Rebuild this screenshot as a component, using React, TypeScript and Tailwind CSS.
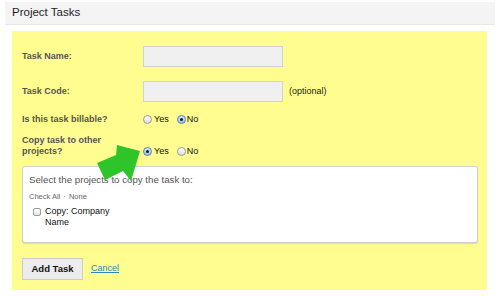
import React from "react";

const font = { fontFamily: '"Liberation Sans", Arial, sans-serif' };

const Radio = ({ checked }: { checked?: boolean }) =>
  checked ? (
    <span className="flex shrink-0 items-center justify-center w-[9px] h-[9px] rounded-full border border-[#4f7fbf] bg-gradient-to-b from-[#d9e8fa] to-[#9cc3ee]">
      <span className="block w-[3px] h-[3px] rounded-full bg-[#1a1a1a]" />
    </span>
  ) : (
    <span className="block shrink-0 w-[9px] h-[9px] rounded-full border border-[#9a9a9a] bg-gradient-to-b from-white to-[#dcdcdc]" />
  );

const YesNo = ({ yes }: { yes: boolean }) => (
  <div className="flex items-center text-[9px] text-[#111] leading-[11px]">
    <Radio checked={yes} />
    <span className="ml-[2px]">Yes</span>
    <span className="ml-[8px] block">
      <Radio checked={!yes} />
    </span>
    <span className="ml-[1px]">No</span>
  </div>
);

const Label = ({ children }: { children: React.ReactNode }) => (
  <div className="w-[121px] shrink-0 pr-[20px] text-[9px] font-bold leading-[11px] text-[#555]">
    {children}
  </div>
);

export default function App() {
  return (
    <div className="relative w-[500px] h-[297px] bg-white overflow-hidden" style={font}>
      <div className="mt-[2px] mx-[5px] h-[23px] bg-[#f5f4f5] border-b border-[#e9e8e9] flex items-center pl-[7px]">
        <span className="text-[11.5px] text-[#1e1e1e]">Project Tasks</span>
      </div>

      <div className="mt-[6px] ml-[12px] w-[475px] h-[259px] bg-[#fffd8f] pt-[15px] pl-[10px] pr-[9px]">
        <div className="flex items-center h-[21px]">
          <Label>Task Name:</Label>
          <div className="w-[140px] h-[21px] bg-[#f0f0f0] border border-[#d2d2d2]" />
        </div>

        <div className="mt-[14px] flex items-center h-[21px]">
          <Label>Task Code:</Label>
          <div className="w-[140px] h-[21px] bg-[#f0f0f0] border border-[#d2d2d2]" />
          <span className="ml-[6px] text-[9px] text-[#222]">(optional)</span>
        </div>

        <div className="mt-[9px] flex items-center h-[16px]">
          <Label>Is this task billable?</Label>
          <YesNo yes={false} />
        </div>

        <div className="mt-[8px] flex items-end">
          <Label>Copy task to other projects?</Label>
          <YesNo yes={true} />
        </div>

        <div className="mt-[9px] w-[456px] h-[77px] bg-white border border-[#cfcfcf] rounded-[3px] shadow-[0_1px_1px_rgba(0,0,0,0.12)] pt-[7px] pl-[6px]">
          <div className="text-[9.7px] leading-[12px] text-[#555]">
            Select the projects to copy the task to:
          </div>
          <div className="mt-[6px] text-[7.5px] leading-[10px] text-[#666]">
            Check All <span className="mx-[1px]">·</span> None
          </div>
          <div className="mt-[4px] flex items-start">
            <span className="block mt-[2px] ml-[4px] w-[8px] h-[8px] rounded-[2px] border border-[#9a9a9a] bg-gradient-to-b from-white to-[#e4e4e4]" />
            <div className="ml-[4px] w-[72px] text-[9px] leading-[11px] text-[#111]">
              Copy: Company Name
            </div>
          </div>
        </div>

        <div className="mt-[15px] flex items-center">
          <div className="w-[61px] h-[22px] flex items-center justify-center bg-[#ececec] border border-[#cdcdcd] text-[9.5px] font-bold text-[#111]">
            Add Task
          </div>
          <span className="ml-[8px] text-[9px] text-[#2a89b5] underline">Cancel</span>
        </div>
      </div>

      <svg className="absolute left-0 top-0" width="500" height="297" viewBox="0 0 500 297">
        <polygon
          points="97,163 116,155 117,145 140,151 131,181 123,171 105,180"
          fill="#2ec42a"
        />
      </svg>
    </div>
  );
}
